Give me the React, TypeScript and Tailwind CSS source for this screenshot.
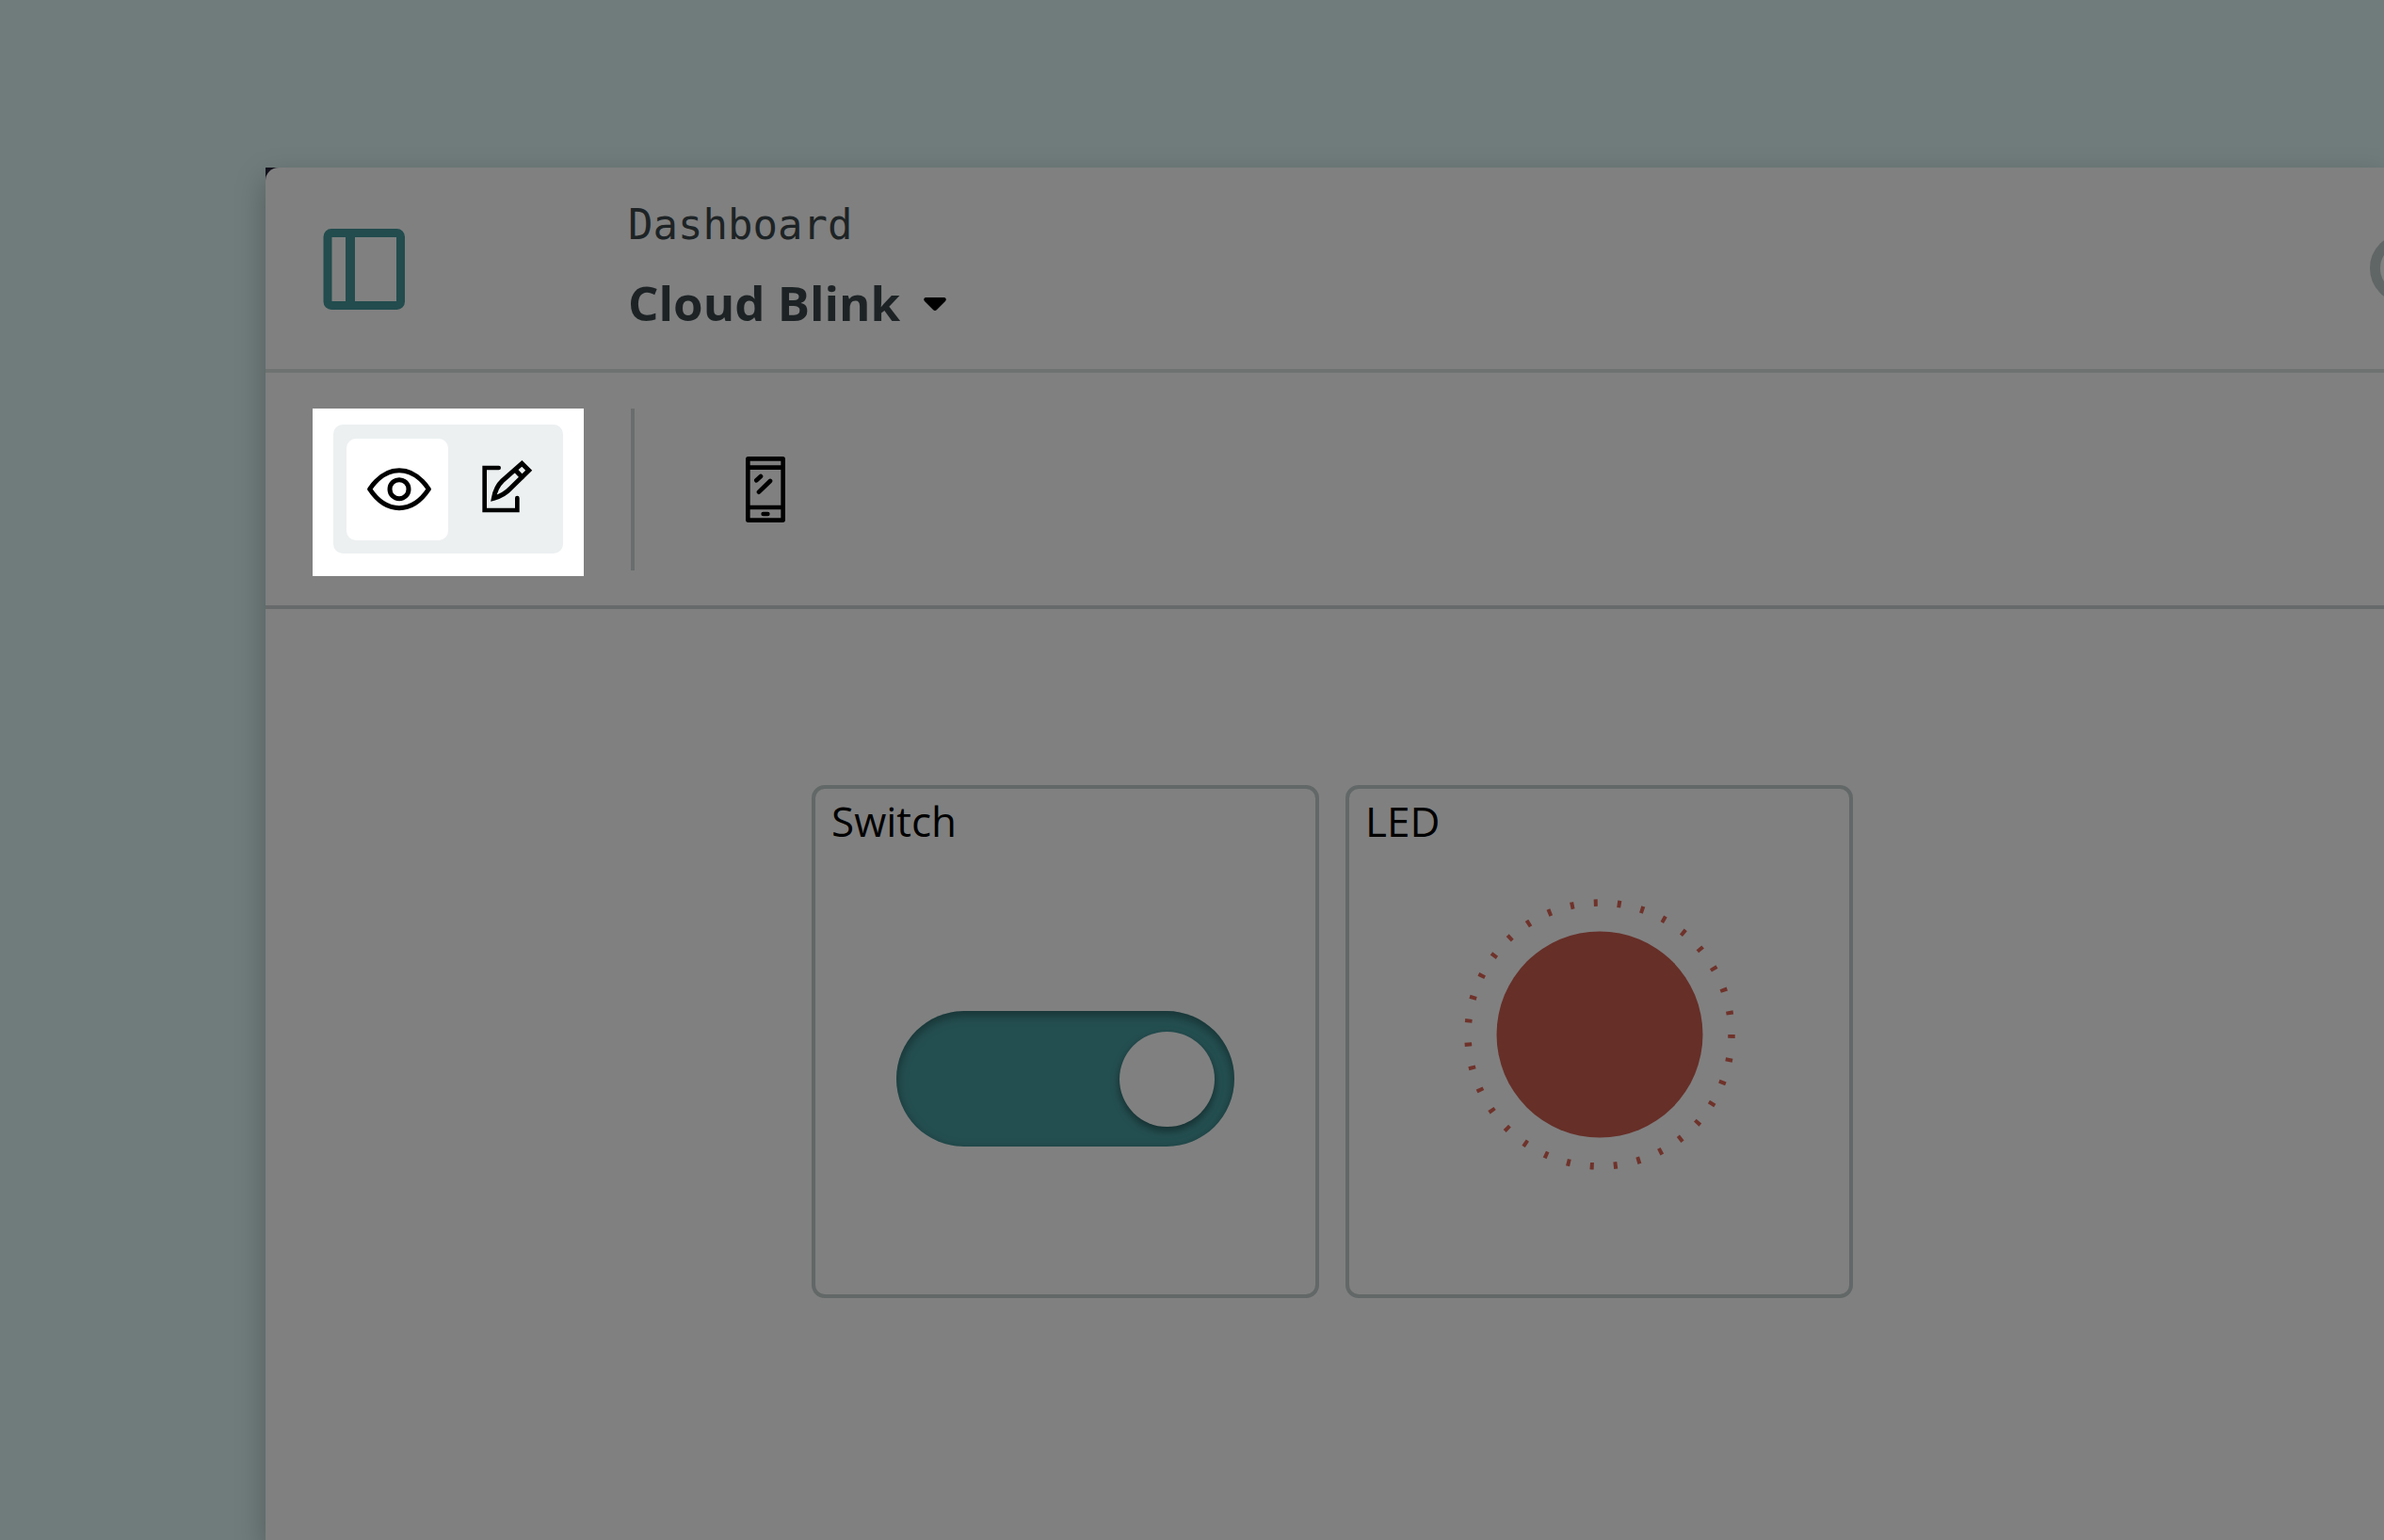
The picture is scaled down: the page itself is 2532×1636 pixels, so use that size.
import { useState } from "react";
import type { ReactNode } from "react";

function PanelIcon() {
  return (
    <svg width="88" height="88" viewBox="0 0 88 88" fill="none" stroke="currentColor" strokeWidth="9" aria-hidden="true">
      <rect x="6" y="5.5" width="77.5" height="77" rx="4" />
      <path d="M30 5v78" strokeWidth="10" />
    </svg>
  );
}

function EyeIcon() {
  return (
    <svg width="72" height="50" viewBox="-6 1 216 150" fill="none" stroke="currentColor" strokeWidth="15" strokeLinejoin="round" aria-hidden="true">
      <path d="M14 75C40 36 72 15 108 15s68 21 94 60c-26 39-58 60-94 60S40 114 14 75Z" />
      <circle cx="108" cy="75" r="30" />
    </svg>
  );
}

function EditIcon() {
  return (
    <svg width="72" height="64" viewBox="522 204 216 192" fill="none" stroke="currentColor" strokeWidth="14" strokeLinecap="round" strokeLinejoin="miter" aria-hidden="true">
      <path d="M629 231H584V366H688V327" />
      <path d="M613 328C617 306 626 286 641 272L703 217L725 239L666 297C652 312 634 322 613 328Z" strokeWidth="15" />
      <path d="M683 239L703 260" strokeWidth="15" />
    </svg>
  );
}

function PhoneIcon() {
  return (
    <svg width="44" height="72" viewBox="94 70 132 216" fill="none" stroke="currentColor" strokeWidth="14" strokeLinecap="round" aria-hidden="true">
      <rect x="104" y="80" width="112" height="196" rx="1" />
      <path d="M104 108h112M104 235h112M131 149l14-13M139 186l36-35M153 256h14" />
    </svg>
  );
}

function Lamp() {
  return (
    <svg width="292" height="292" viewBox="-146 -146 292 292" role="img" aria-label="LED off">
      <circle r="109.5" fill="#662f28" />
      <circle r="140" fill="none" stroke="#6f322a" strokeWidth="7.5" pathLength="35" strokeDasharray="0.16 0.84" />
    </svg>
  );
}

function Widget({ title, children }: { title: string; children: ReactNode }) {
  return (
    <section className="flex h-[545px] w-[539px] flex-col rounded-[14px] border-4 border-[#626867]">
      <h2 className="px-[17px] pt-1 text-[44px] leading-[60px] text-black">{title}</h2>
      {children}
    </section>
  );
}

export default function App() {
  const [mode, setMode] = useState("view");
  const [on, setOn] = useState(true);
  const active = "flex size-27 items-center justify-center rounded-[10px] bg-white";
  const idle = "flex size-27 items-center justify-center rounded-[10px]";

  return (
    <div className="min-h-screen overflow-hidden bg-[#6f7c7b] pt-[178px] pl-[282px] font-['Open_Sans',sans-serif]">
      <div className="bg-[#12111c] shadow-[0_12px_30px_rgba(0,0,0,0.25)]">
        <div className="flex min-h-[calc(100vh-178px)] flex-col rounded-tl-[14px] bg-[#808080]">
          <header className="flex h-[218px] items-center border-b-4 border-[#6e7372] pl-[60px]">
            <button type="button" aria-label="Toggle sidebar" className="pt-0.5 text-[#224c4e]">
              <PanelIcon />
            </button>
            <div className="ml-[237px] flex flex-col">
              <label htmlFor="dashboard" className="font-['DejaVu_Sans_Mono',monospace] text-[44px] leading-[60px] text-[#1d2325]">
                Dashboard
              </label>
              <div className="mt-3.5 flex items-center gap-6 pb-0.5">
                <select id="dashboard" className="appearance-none text-[51px] leading-[76px] font-bold text-[#1d2325]">
                  <option>Cloud Blink</option>
                </select>
                <svg width="24" height="15" viewBox="0 0 24 15" className="mt-1" aria-hidden="true">
                  <path d="M2 0H22Q25 1 23 4L14 13Q12 15 10 13L1 4Q-1 1 2 0Z" />
                </svg>
              </div>
            </div>
            <button type="button" aria-label="Account" className="-mr-[59px] ml-auto size-[74px] shrink-0 rounded-full border-[11px] border-[#606665]" />
          </header>

          <div className="flex h-[251px] items-start border-b-4 border-[#676a6b] pt-[38px] pl-[50px]">
            <div className="flex h-[178px] w-72 items-start bg-white px-[22px] pt-[17px]">
              <div className="flex h-[137px] w-full items-center rounded-[10px] bg-[#ecf0f1] px-3.5">
                <button type="button" aria-label="View mode" aria-pressed={mode === "view"} onClick={() => setMode("view")} className={mode === "view" ? active : idle}>
                  <EyeIcon />
                </button>
                <button type="button" aria-label="Edit mode" aria-pressed={mode === "edit"} onClick={() => setMode("edit")} className={mode === "edit" ? active : idle}>
                  <EditIcon />
                </button>
              </div>
            </div>
            <div className="ml-[50px] h-[172px] w-1 bg-[#686e6d]" />
            <button type="button" aria-label="Mobile layout" className="ml-[117px] flex h-[171px] items-center">
              <PhoneIcon />
            </button>
          </div>

          <main className="flex flex-1 items-start gap-7 pt-[187px] pl-[580px]">
            <Widget title="Switch">
              <input
                type="checkbox"
                role="switch"
                aria-label="Switch"
                checked={on}
                onChange={(e) => setOn(e.target.checked)}
                className="mx-auto mt-[172px] flex h-36 w-[359px] appearance-none items-center rounded-full bg-[#555] px-[21px] shadow-[inset_0_4px_12px_rgba(0,0,0,0.4)] before:size-[101px] before:rounded-full before:bg-[#808080] before:shadow-[0_4px_10px_rgba(0,0,0,0.45)] checked:justify-end checked:bg-[#244f51]"
              />
            </Widget>
            <Widget title="LED">
              <div className="mt-[51px] flex justify-center">
                <Lamp />
              </div>
            </Widget>
          </main>
        </div>
      </div>
    </div>
  );
}
